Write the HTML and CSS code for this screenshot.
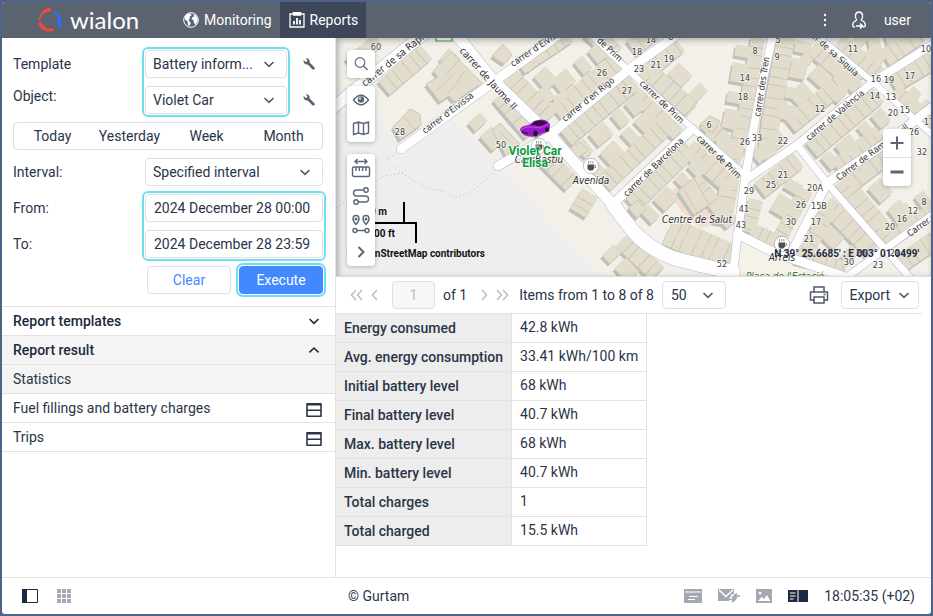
FILE: index.html
```html
<!DOCTYPE html>
<html lang="en">
<head>
    <meta charset="UTF-8">
    <meta name="viewport" content="width=device-width, initial-scale=1.0">
    <title>Wialon - Reports</title>
    <link rel="stylesheet" href="styles.css">
</head>
<body>
    <!-- Shared icons -->
    <svg class="sprite" aria-hidden="true">
        <symbol id="i-down" viewBox="0 0 12 12"><path d="M1.500 4L6 8.300 10.500 4" fill="none" stroke="currentColor" stroke-width="1.600"/></symbol>
        <symbol id="i-up" viewBox="0 0 12 12"><path d="M1.500 8.300L6 4l4.500 4.300" fill="none" stroke="currentColor" stroke-width="1.600"/></symbol>
        <symbol id="i-wrench" viewBox="0 0 12 12"><path d="M.8 4.200A3.100 3.100 0 0 1 .7 2l1.900 1.900 1.500-.3.300-1.500L2.600.5a3.200 3.200 0 0 1 4 4l4.700 4.800a1.300 1.300 0 0 1-1.900 1.900L4.700 6.400A3.200 3.200 0 0 1 .8 4.200z" fill="currentColor"/></symbol>
        <symbol id="i-table" viewBox="0 0 16 16"><path d="M1 1.800h14v12.500H1zM1 8.200h14" fill="none" stroke="currentColor" stroke-width="1.600" stroke-linejoin="round"/><path d="M1 1.500h14v2H1z" fill="currentColor"/></symbol>
        <symbol id="i-cup" viewBox="0 0 16 16"><circle cx="8" cy="8" r="7.300" fill="#fff" stroke="#777a9c" stroke-width="1.200"/><path d="M4.500 6.500h6.500v4l-1.500 2H6l-1.500-2z" fill="#544f52" stroke="none"/><path d="M11 7.500h1.500v2H11M5.500 3v2.500M7.700 3v2.500M9.900 3v2.500" fill="none" stroke="#544f52" stroke-width="1"/></symbol>
    </svg>

    <div class="app">
        <!-- Header -->
        <header class="topbar">
            <a class="logo" href="#">
                <svg width="26" height="26" viewBox="0 0 26 26" fill="none" stroke-linecap="round">
                    <path d="M13 2.500C7 3.500 3.500 8 2.300 13" stroke="#f4473c" stroke-width="1.800"/>
                    <path d="M8 4.200q2.500-1.700 4.500-1.500" stroke="#f4473c" stroke-width="3.600"/>
                    <path d="M3.200 18c3 4.300 8 5.600 12.500 4.700" stroke="#f4473c" stroke-width="2.800"/>
                    <path d="M3.200 17.500q1.500 2.500 4 3.500" stroke="#f4473c" stroke-width="3.800"/>
                    <path d="M17.500 4.500c4 3 6 7 5.500 13" stroke="#2f6bff" stroke-width="2"/>
                    <path d="M22.300 12q.8 3 .3 6" stroke="#2f6bff" stroke-width="3.800"/>
                </svg>
                <span>wialon</span>
            </a>
            <nav class="tabs">
                <a href="#">
                    <svg width="16" height="16" viewBox="0 0 16 16"><circle cx="8" cy="8" r="7.300" fill="none" stroke="#fff"/><path d="M2 4l3-2.500 3 .2.500 1.500L6.500 5 7 6.500 5.500 8l1 1.500 1.300 1.200L6.500 14l-1.500-1-.5-3.500L2 7.500zM10 2l3 1.500 1.800 3.500-.5 3-2 3-1.500-2.500-.3-2.500L8.500 7l1-2 1.800-.5z" fill="#fff"/></svg>
                    Monitoring
                </a>
                <a class="active" href="#">
                    <svg width="16" height="16" viewBox="0 0 16 16" fill="none" stroke="#fff" stroke-width="1.300"><path d="M1 2h14v13H1z"/><path d="M4.500 0v3h7V0" fill="#fff"/><path d="M5 9v3.500M8 6v6.500M11 8v4.500" stroke-width="1.800"/></svg>
                    Reports
                </a>
            </nav>
            <div class="account">
                <button aria-label="Menu">
                    <svg width="4" height="14" viewBox="0 0 4 14" fill="#fff"><circle cx="2" cy="2" r="1.200"/><circle cx="2" cy="7" r="1.200"/><circle cx="2" cy="12" r="1.200"/></svg>
                </button>
                <button class="user">
                    <svg width="16" height="18" viewBox="0 0 16 18" fill="none" stroke="#fff" stroke-width="1.300"><path d="M5.700 8.600C3.800 7 3.600 1 8 1s4.200 6 2.300 7.600c-.2 1.300 4 1.100 4 5.400 0 1.500-1 2-2.300 2M5.700 8.600c.2 1.300-4 1.100-4 5.400 0 1.500 1 2 2.300 2"/><path d="M5 15h6M9 12.500l2.500 2.500L9 17.500" stroke-width="1.500"/></svg>
                    user
                </button>
            </div>
        </header>

        <main class="content">
            <!-- Report settings -->
            <aside class="sidebar">
                <form class="report-form">
                    <div class="group">
                        <div class="labels">
                            <label for="template">Template</label>
                            <label class="raised" for="object">Object:</label>
                        </div>
                        <div class="controls marked">
                            <div class="select"><select id="template"><option>Battery inform...</option></select><svg><use href="#i-down"/></svg></div>
                            <div class="select"><select id="object"><option>Violet Car</option></select><svg><use href="#i-down"/></svg></div>
                        </div>
                        <div class="tools">
                            <button type="button" aria-label="Template properties"><svg width="12" height="12"><use href="#i-wrench"/></svg></button>
                            <button type="button" aria-label="Object properties"><svg width="12" height="12"><use href="#i-wrench"/></svg></button>
                        </div>
                    </div>
                    <div class="presets">
                        <button type="button">Today</button>
                        <button type="button">Yesterday</button>
                        <button type="button">Week</button>
                        <button type="button">Month</button>
                    </div>
                    <div class="group">
                        <div class="labels"><label for="interval">Interval:</label></div>
                        <div class="controls">
                            <div class="select"><select id="interval"><option>Specified interval</option></select><svg><use href="#i-down"/></svg></div>
                        </div>
                    </div>
                    <div class="group">
                        <div class="labels">
                            <label for="from">From:</label>
                            <label for="to">To:</label>
                        </div>
                        <div class="controls marked">
                            <input type="text" id="from" value="2024 December 28 00:00">
                            <input type="text" id="to" value="2024 December 28 23:59">
                        </div>
                    </div>
                    <div class="actions">
                        <button type="button" class="clear">Clear</button>
                        <button type="button" class="execute marked">Execute</button>
                    </div>
                </form>
                <div class="sections">
                    <button class="section">Report templates<svg width="12" height="12"><use href="#i-down"/></svg></button>
                    <button class="section open">Report result<svg width="12" height="12"><use href="#i-up"/></svg></button>
                    <a class="item open" href="#">Statistics</a>
                    <a class="item" href="#">Fuel fillings and battery charges<svg width="16" height="16"><use href="#i-table"/></svg></a>
                    <a class="item" href="#">Trips<svg width="16" height="16"><use href="#i-table"/></svg></a>
                </div>
            </aside>

            <section class="workarea">
                <!-- Map -->
                <div class="map">
                    <svg class="map-canvas" viewBox="336 38 595 238" preserveAspectRatio="xMinYMin slice">
                        <defs>
                            <g id="lots" fill="none">
                                <g stroke-width="18">
                                    <path d="M510 76l40 42M556 112l66-54M566 138l68-56M520 66l48-32M632 48l23-18M645 72l34-28"/>
                                    <path d="M645 68l47 42M688 148l45 40M604 184l68-64M632 205l58-57M500 95l32 38M622 240l36 34"/>
                                    <path d="M786 38l-15 82-5 40M790 125l70-57M812 150l66-55M760 190l38-30M838 42l42 35M885 58l35-24M893 84l40-24"/>
                                    <path d="M849 184l42-32M842 180l50 60M826 204l46 46M900 264l35-24M384 88l42-36M590 30l26 24"/>
                                    <path d="M546 158l26 26M590 193l-12 20M671 226l62 28M666 236l56 24M730 180l-8 44"/>
                                </g>
                                <g stroke-width="14">
                                    <path d="M758 38l-12 72-13 52M812 48l46 40M835 166l44-34M806 190l-26 48M830 208l-24 46M895 90l38 34M705 122l38 34"/>
                                    <path d="M636 94l42 40M755 158l28-22M756 200l-8 32M752 230l30 14M796 256l50 12M893 238l40-28M694 178l38 46M350 64l28-24M444 54l12 10"/>
                                </g>
                                <g stroke-width="16" class="yards">
                                    <path d="M528 58l36 42M542 98l68-54M580 152l62-52M660 56l44 42M592 172l66-62M646 218l58-56M702 138l40 36"/>
                                    <path d="M744 46l-12 70-12 46M804 42l-16 78M780 112l60-52M826 164l60-50M800 58l44 40M856 36l40 36M796 182l-24 40"/>
                                    <path d="M862 170l52 58M812 218l46 44M908 92l30 30M880 230l50-34M474 118l30 34M608 250l28 30M868 42l50-14"/>
                                </g>
                            </g>
                            <g id="houses">
                                <path d="M426 84l12-7-5-6 18-19 31 31-28 19-5-6-9 6z"/>
                                <path d="M393 127l17-18 10 5 1 11-21 15z"/>
                                <path d="M492 56l11-12 9 11-8 9z"/>
                                <path d="M492 130l8-7 20 21-14 12z"/>
                                <path d="M678 191l16-13 15 27-15 10z"/>
                                <path d="M700 124l10-8 10 5-7 12z"/>
                                <path d="M570 148l10-6 8 8-10 8z"/>
                                <path d="M628 208l10-8 8 9-9 9z"/>
                            </g>
                        </defs>
                        <path class="land" d="M336 38h600v240H336z"/>
                        <path class="field" d="M336 112l40-4 27 46 50-33 147 155H336z"/>
                        <path class="square" d="M738 238l100 42H738z"/>
                        <path class="clinic" d="M668 192l22-13 29 44-19 5-18-16z"/>

                        <!-- Buildings -->
                        <g transform="translate(-2 3)"><use href="#lots" class="shade"/><use href="#houses" class="house-shade"/></g>
                        <use href="#lots" class="edge"/>
                        <use href="#lots" class="roof"/>
                        <use href="#houses" class="house"/>
                        <path class="walls" d="M436 91l19-18M447 94l14-14M459 60l-14 16M404 117l12 14M500 132l9 9M684 190l13 22M466 70l-10 12"/>

                        <!-- Footpaths -->
                        <path class="trail" d="M397 153l-10 6 16 15 25 15 15 2 12 6 15-4 22-19 8-12M403 173l-20 3-20 15-28 17"/>

                        <!-- Streets -->
                        <g class="street-line">
                            <path stroke-width="13" d="M330 110L426 32"/>
                            <path stroke-width="10" d="M401 149L560 34M498 166l54-32"/>
                            <path stroke-width="12" d="M456 34l36 45 58 56 63 70"/>
                            <path stroke-width="15" d="M613 205l20 26q16 18 40 27 28 8 60 14"/>
                            <path stroke-width="10" d="M550 135l78-65 50-36M615 202l77-73M737 234l36 18 75 26M793 250l34-67 56-38 52-40"/>
                            <path stroke-width="7" d="M590 34l38 36 64 58 53 47M815 34l58 48 62 55"/>
                            <path stroke-width="9" d="M773 34l-15 70-13 74-13 102M745 180l52-35 76-63 62-39"/>
                            <path stroke-width="8" d="M797 145l30 38 58 66 28 32M840 282l45-33 50-36"/>
                        </g>
                        <g class="street">
                            <path stroke-width="12" d="M330 110L426 32"/>
                            <path stroke-width="9" d="M401 149L560 34M498 166l54-32"/>
                            <path stroke-width="11" d="M456 34l36 45 58 56 63 70"/>
                            <path stroke-width="14" d="M613 205l20 26q16 18 40 27 28 8 60 14"/>
                            <path stroke-width="9" d="M550 135l78-65 50-36M615 202l77-73M737 234l36 18 75 26M793 250l34-67 56-38 52-40"/>
                            <path stroke-width="6" d="M590 34l38 36 64 58 53 47M815 34l58 48 62 55"/>
                            <path stroke-width="8" d="M773 34l-15 70-13 74-13 102M745 180l52-35 76-63 62-39"/>
                            <path stroke-width="7" d="M797 145l30 38 58 66 28 32M840 282l45-33 50-36"/>
                        </g>
                        <path d="M436 36h16v5h-16z" fill="#fff" stroke="#3aa34a" stroke-width="1.200"/>

                        <!-- Street names -->
                        <g class="street-name">
                            <text class="big" transform="translate(365 87) rotate(-39)">carrer de sa Rapita</text>
                            <text class="big" transform="translate(459 51) rotate(48)">carrer de Jaume II</text>
                            <text transform="translate(425 134) rotate(-37)">carrer d'Eivissa</text>
                            <text transform="translate(513 67) rotate(-34)">carrer d'Eivissa</text>
                            <text transform="translate(565 122) rotate(-39)">carrer d'en Rigo</text>
                            <text transform="translate(577 23) rotate(43)">carrer de Prim</text>
                            <text transform="translate(639 84) rotate(44)">carrer de Prim</text>
                            <text transform="translate(696 139) rotate(44)">carrer de Prim</text>
                            <text transform="translate(627 197) rotate(-44)">carrer de Barcelona</text>
                            <text transform="translate(760 117) rotate(-81)">carrer des Tren</text>
                            <text transform="translate(809 141) rotate(-40)">carrer de València</text>
                            <text transform="translate(799 26) rotate(42)">carrer de sa Siquia</text>
                            <text transform="translate(839 181) rotate(-37)">Carrer de Ramon Llull</text>
                            <text transform="translate(910 237) rotate(-36)">Carrer de</text>
                            <text transform="translate(670 41) rotate(-38)">carrer</text>
                        </g>

                        <!-- House numbers -->
                        <g class="number">
                            <text x="376" y="50">60</text><text x="400" y="135">28</text><text x="501" y="148">50</text><text x="602" y="76">26</text><text x="627" y="94">27</text>
                            <text x="637" y="55">18</text><text x="656" y="68">21</text><text x="669" y="62">19</text><text x="639" y="72">23</text><text x="651" y="43">14</text>
                            <text x="755" y="54">8</text><text x="777" y="60">9</text><text x="778" y="43">5</text><text x="745" y="81">14</text><text x="743" y="100">18</text>
                            <text x="709" y="128">6</text><text x="745" y="145">26</text><text x="757" y="141">33</text><text x="783" y="144">22</text><text x="820" y="112">12</text>
                            <text x="853" y="52">11</text><text x="926" y="52">10</text><text x="876" y="82">16</text><text x="889" y="83">19</text><text x="910" y="79">17</text>
                            <text x="875" y="99">14</text><text x="891" y="100">13</text><text x="893" y="116">20</text><text x="905" y="113">15</text><text x="929" y="125">17</text>
                            <text x="914" y="135">26</text><text x="922" y="155">32</text><text x="783" y="178">21</text><text x="771" y="188">25</text><text x="749" y="194">29</text>
                            <text x="744" y="212">41</text><text x="741" y="228">43</text><text x="722" y="267">52</text><text x="815" y="191">20A</text><text x="801" y="208">26</text>
                            <text x="819" y="209">15B</text><text x="791" y="225">30</text><text x="816" y="225">17</text><text x="809" y="242">21</text><text x="924" y="205">8</text>
                            <text x="913" y="214">12</text><text x="902" y="222">16</text><text x="890" y="230">20</text><text x="849" y="265">30</text><text x="878" y="268">23</text>
                            <text x="861" y="256">26</text><text x="895" y="256">21</text>
                        </g>

                        <!-- Places -->
                        <g class="place">
                            <use href="#i-cup" x="531" y="138" width="16" height="16"/>
                            <use href="#i-cup" x="583" y="158" width="16" height="16"/>
                            <use href="#i-cup" x="774" y="236" width="16" height="16"/>
                            <text x="539" y="163">Can Bastiu</text>
                            <text x="591" y="184">Avenida</text>
                            <text x="697" y="223">Centre de Salut</text>
                            <text x="782" y="261">Arrels</text>
                            <text class="green" x="785" y="280">Plaça de l'Estació</text>
                        </g>

                        <!-- Unit -->
                        <g transform="translate(519 118)">
                            <path d="M3 17l14 3 14-7-3-2z" fill="#4a4a45" opacity=".5"/>
                            <path d="M1 11q1-3 9-4l5-4q8-3 13 0l3 3-.5 6-3 2-9 3-5 1.500q-7 0-11-3.500z" fill="#9a17cf"/>
                            <path d="M12 7l4-3.500q6-2 10-.3L28 5l-6 3z" fill="#351045"/>
                            <path d="M2 11q6-3 13-2l6 1 9-4" fill="none" stroke="#c74bea"/>
                            <ellipse cx="16.500" cy="15.500" rx="2.200" ry="3" fill="#231a28"/><ellipse cx="28" cy="11.500" rx="1.800" ry="2.600" fill="#231a28"/>
                            <path d="M3 14l6 1.500" stroke="#4e0a69" stroke-width="1.500"/>
                        </g>
                        <text class="unit" x="535" y="155">Violet Car</text>
                        <text class="unit" x="535" y="167">Elisa</text>

                        <!-- Scale -->
                        <path d="M360 223h56M404 202v21M416 222v21" fill="none" stroke="#000" stroke-width="2"/>
                        <g class="scale">
                            <text x="387" y="215">30 m</text>
                            <text x="395" y="237">100 ft</text>
                            <text x="485" y="257">© OpenStreetMap contributors</text>
                            <text class="coords" x="919" y="257">N 39° 25.6685' : E 003° 01.0499'</text>
                        </g>
                    </svg>

                    <div class="map-tools">
                        <div class="tool-group">
                            <button aria-label="Search"><svg width="18" height="18" viewBox="0 0 18 18"><circle cx="8" cy="7.500" r="4.800" stroke-width="1.200"/><path d="M11.500 11l4 4" stroke-width="1.200"/></svg></button>
                        </div>
                        <div class="tool-group">
                            <button aria-label="Visibility"><svg width="18" height="18" viewBox="0 0 18 18"><path d="M1.500 9Q9-.5 16.500 9 9 18.500 1.500 9z"/><circle cx="9" cy="8.500" r="3.200" fill="#5b6679" stroke="none"/><circle cx="8" cy="7.500" r="1" fill="#fff" stroke="none"/></svg></button>
                            <button aria-label="Map layers"><svg width="18" height="18" viewBox="0 0 18 18"><path d="M1.500 4.500L6.500 3l5 1.500 5-1.500v11l-5 1.500-5-1.500-5 1.500zM6.500 3v11M11.500 4.500v11"/></svg></button>
                        </div>
                        <div class="tool-group">
                            <button aria-label="Distance"><svg width="20" height="20" viewBox="0 0 20 20"><path d="M4 3.500h12M6.500 1L4 3.500 6.500 6M13.500 1L16 3.500 13.500 6"/><rect x="1.500" y="9" width="17" height="9.500" rx="1.500"/><path d="M5 9v4M8.300 9v4M11.600 9v4M15 9v4"/></svg></button>
                            <button aria-label="Routing"><svg width="20" height="20" viewBox="0 0 20 20"><circle cx="15" cy="4" r="2.200"/><circle cx="5" cy="16" r="2.200"/><path d="M12.800 4H5.500a3 3 0 0 0 0 6h9a3 3 0 0 1 0 6H7.200M8 10h4"/></svg></button>
                            <button aria-label="Nearest units"><svg width="20" height="20" viewBox="0 0 20 20"><path d="M5 10.500C.5 6 1.500 1.500 5 1.500s4.500 4.500 0 9zM15 10.500c-4.500-4.500-3.500-9 0-9s4.500 4.500 0 9zM6 16.500h8"/><circle cx="5" cy="5" r=".8"/><circle cx="15" cy="5" r=".8"/><circle cx="4" cy="16.500" r="2"/><circle cx="16" cy="16.500" r="2"/></svg></button>
                            <button aria-label="More tools"><svg width="18" height="18" viewBox="0 0 18 18"><path d="M6.500 4l5 5-5 5" stroke-width="2"/></svg></button>
                        </div>
                    </div>
                    <div class="zoom">
                        <button aria-label="Zoom in"><svg width="18" height="18" viewBox="0 0 18 18"><path d="M9 2.500v13M2.500 9h13" stroke-width="2"/></svg></button>
                        <button aria-label="Zoom out"><svg width="18" height="18" viewBox="0 0 18 18"><path d="M2.500 9h13" stroke-width="3"/></svg></button>
                    </div>
                </div>

                <!-- Report toolbar -->
                <div class="pager">
                    <button class="arrow" aria-label="First page"><svg width="13" height="12" viewBox="0 0 13 12"><path d="M6 1L1.500 6 6 11M12 1L7.500 6l4.500 5"/></svg></button>
                    <button class="arrow prev" aria-label="Previous page"><svg width="7" height="12" viewBox="0 0 7 12"><path d="M6 1L1.500 6 6 11"/></svg></button>
                    <input class="page" type="text" value="1" aria-label="Page" disabled>
                    <span class="total">of 1</span>
                    <button class="arrow" aria-label="Next page"><svg width="7" height="12" viewBox="0 0 7 12"><path d="M1 1l4.500 5L1 11"/></svg></button>
                    <button class="arrow last" aria-label="Last page"><svg width="13" height="12" viewBox="0 0 13 12"><path d="M1 1l4.500 5L1 11M7 1l4.500 5L7 11"/></svg></button>
                    <span class="range">Items from 1 to 8 of 8</span>
                    <div class="select count"><select aria-label="Items per page"><option>50</option></select><svg><use href="#i-down"/></svg></div>
                    <button class="print" aria-label="Print"><svg width="20" height="20" viewBox="0 0 20 20"><path d="M5 7V2h10v5M5 15H1.500V7h17v8H15M5 12h10v6H5zM14.500 9.500h2"/></svg></button>
                    <button class="export">Export<svg width="12" height="12"><use href="#i-down"/></svg></button>
                </div>

                <table class="stats">
                    <tr><th>Energy consumed</th><td>42.8 kWh</td></tr>
                    <tr><th>Avg. energy consumption</th><td>33.41 kWh/100 km</td></tr>
                    <tr><th>Initial battery level</th><td>68 kWh</td></tr>
                    <tr><th>Final battery level</th><td>40.7 kWh</td></tr>
                    <tr><th>Max. battery level</th><td>68 kWh</td></tr>
                    <tr><th>Min. battery level</th><td>40.7 kWh</td></tr>
                    <tr><th>Total charges</th><td>1</td></tr>
                    <tr><th>Total charged</th><td>15.5 kWh</td></tr>
                </table>
            </section>
        </main>

        <!-- Footer -->
        <footer class="statusbar">
            <div class="layout">
                <button aria-label="Toggle panel"><svg width="16" height="14" viewBox="0 0 16 14"><path d="M.5.5h15v13H.5z" fill="#fff" stroke="#1d2940"/><path d="M0 0h5v14H0z" fill="#1d2940"/></svg></button>
                <button aria-label="Apps"><svg width="14" height="14" viewBox="0 0 14 14" fill="#a3a8b2"><path d="M0 0h4v4H0zM5 0h4v4H5zM10 0h4v4h-4zM0 5h4v4H0zM5 5h4v4H5zM10 5h4v4h-4zM0 10h4v4H0zM5 10h4v4H5zM10 10h4v4h-4z"/></svg></button>
            </div>
            <span>© Gurtam</span>
            <div class="indicators">
                <button aria-label="Notifications"><svg width="18" height="14" viewBox="0 0 18 14"><path d="M0 0h18v14H0z" fill="#a3a8b2"/><path d="M1 3h16M5 7.500h9M4 10.500h7" stroke="#fff" stroke-width="1.200"/></svg></button>
                <button aria-label="Messages"><svg width="22" height="14" viewBox="0 0 22 14"><path d="M0 0h16v5h-2l-3 5v2H0z" fill="#a3a8b2"/><path d="M1 1l7 6.500L15 1" fill="none" stroke="#fff" stroke-width="1.500"/><path d="M22 7h-6M18.800 4.500L16 7l2.800 2.500M11 10.500h6M14.200 8l2.800 2.500-2.800 2.500" fill="none" stroke="#a3a8b2" stroke-width="1.700"/></svg></button>
                <button aria-label="Media"><svg width="16" height="14" viewBox="0 0 16 14"><path d="M0 0h16v14H0z" fill="#a3a8b2"/><circle cx="4" cy="4" r="1.500" fill="#fff"/><path d="M2 12l3.500-4L8 10l3-4 3.500 6z" fill="#fff"/></svg></button>
                <button aria-label="Split view"><svg width="20" height="12" viewBox="0 0 20 12"><path d="M0 0h9.500v12H0zM10.500 0H20v12h-9.500z" fill="#1d2940"/><path d="M2 3h5.500M2 6h5.500M2 9h3.500" stroke="#fff" stroke-width="1.200"/></svg></button>
                <time>18:05:35 (+02)</time>
            </div>
        </footer>
    </div>
</body>
</html>
```
FILE: styles.css
```css
* {
    margin: 0;
    padding: 0;
    box-sizing: border-box;
}

body {
    font-family: Roboto, sans-serif;
    font-size: 14px;
    line-height: 20px;
    color: #2a3548;
    background: #4f6389;
}

button,
input,
select {
    font: inherit;
    color: inherit;
    background: none;
    border: none;
}

button {
    cursor: pointer;
}

a {
    color: inherit;
    text-decoration: none;
}

svg {
    display: block;
    flex: none;
}

.sprite {
    position: absolute;
    width: 0;
    height: 0;
}

.app {
    display: flex;
    flex-direction: column;
    height: 100vh;
    border: 2px solid #4f6389;
    border-radius: 5px;
    background: #fff;
    overflow: hidden;
}

/* Header */
.topbar {
    display: flex;
    height: 36px;
    background: #5c6370;
    color: #fff;
}

.logo {
    display: flex;
    align-items: center;
    gap: 7px;
    width: 172px;
    padding-left: 35px;
    font-family: Lato, sans-serif;
    font-size: 24px;
}

.tabs {
    display: flex;
}

.tabs a {
    display: flex;
    align-items: center;
    gap: 5px;
    padding: 0 8px 0 9px;
}

.tabs .active {
    background: #3e4759;
}

.account {
    display: flex;
    align-items: center;
    gap: 24px;
    margin-left: auto;
    padding-right: 20px;
}

.user {
    display: flex;
    align-items: center;
    gap: 17px;
}

.content {
    display: flex;
    flex: 1;
    min-height: 0;
}

/* Sidebar */
.sidebar {
    flex: none;
    width: 334px;
    border-right: 1px solid #e2e2e2;
}

.report-form {
    display: flex;
    flex-direction: column;
    gap: 8px;
    padding: 12px 12px 12px 11px;
    border-bottom: 1px solid #e2e2e2;
}

.group {
    display: flex;
}

.labels {
    display: flex;
    flex-direction: column;
    gap: 8px;
    width: 132px;
}

.labels label {
    height: 28px;
    line-height: 28px;
}

.labels .raised {
    line-height: 20px;
}

.controls {
    display: flex;
    flex: 1;
    flex-direction: column;
    gap: 8px;
    min-width: 0;
}

.marked {
    outline: 2px solid #6ddff0;
    outline-offset: 1px;
    border-radius: 3px;
}

.select {
    position: relative;
}

.select select,
.controls input {
    display: block;
    width: 100%;
    height: 28px;
    padding: 0 8px;
    border: 1px solid #dfe0e2;
    border-radius: 4px;
    background: #fff;
    appearance: none;
}

.select select {
    padding: 0 7px;
}

.select svg {
    position: absolute;
    top: 8px;
    right: 12px;
    width: 12px;
    height: 12px;
    color: #4f5a6c;
    pointer-events: none;
}

.tools {
    display: flex;
    flex-direction: column;
    gap: 8px;
    margin-left: 16px;
    padding-right: 8px;
    color: #5a6270;
}

.tools button {
    height: 28px;
}

.presets {
    display: flex;
    height: 28px;
    border: 1px solid #dfe0e2;
    border-radius: 4px;
}

.presets button {
    flex: 1 1 0;
}

.actions {
    display: flex;
    justify-content: flex-end;
    gap: 8px;
}

.actions button {
    width: 84px;
    height: 28px;
    border: 1px solid #dfe0e2;
    border-radius: 4px;
    color: #4289ff;
}

.actions .execute {
    border-color: #4289ff;
    background: #4289ff;
    color: #fff;
}

.section,
.item {
    display: flex;
    align-items: center;
    justify-content: space-between;
    width: 100%;
    height: 29px;
    padding: 0 13px 0 11px;
    border-bottom: 1px solid #e2e2e2;
}

.section {
    padding-right: 15px;
    font-weight: 500;
    color: #1d2940;
}

.item svg {
    margin-top: 4px;
}

.open {
    background: #f4f4f4;
}

/* Map */
.workarea {
    display: flex;
    flex: 1;
    flex-direction: column;
    align-items: flex-start;
    min-width: 0;
}

.map {
    position: relative;
    width: 100%;
    height: 239px;
    border-bottom: 1px solid #dcdcdc;
    overflow: hidden;
}

.map::after {
    content: "";
    position: absolute;
    inset: 0;
    box-shadow: inset 2px 2px 6px rgba(0, 0, 0, 0.3);
    pointer-events: none;
}

.map-canvas {
    width: 100%;
    height: 100%;
}

.land {
    fill: #f2f0e9;
}

.field {
    fill: #edeeed;
}

.square {
    fill: #f5f2e8;
}

.clinic {
    fill: #f3dccf;
}

.yards {
    stroke-dasharray: 11 7 19 10;
}

.shade {
    stroke: #c1c0b8;
}

.edge {
    stroke: #cdc8b4;
}

.roof {
    stroke: #e2ddcd;
    stroke-dasharray: 9 1 7 1 12 1;
}

.house-shade {
    fill: #c1c0b8;
}

.house {
    fill: #e2ddcd;
    stroke: #cdc8b4;
}

.walls {
    fill: none;
    stroke: #cdc8b4;
}

.trail {
    fill: none;
    stroke: #c5b5b5;
    stroke-dasharray: 1 3;
}

.street-line,
.street {
    fill: none;
    stroke-linecap: round;
    stroke-linejoin: round;
}

.street-line {
    stroke: #b4b6d0;
}

.street {
    stroke: #fefefe;
}

.street-name,
.number,
.place {
    font-family: "DejaVu Sans Condensed", "DejaVu Sans", sans-serif;
    font-size: 9px;
    fill: #303030;
    stroke: #fff;
    stroke-width: 2px;
    stroke-opacity: 0.6;
    paint-order: stroke;
}

.number {
    text-anchor: middle;
    fill: #444;
}

.street-name .big,
.place {
    font-size: 10px;
}

.place {
    font-style: italic;
    text-anchor: middle;
}

.place .green {
    fill: #3b7d2e;
}

.unit {
    font-size: 12px;
    font-weight: 700;
    text-anchor: middle;
    fill: #0a9d41;
    stroke: #fff;
    stroke-width: 2px;
    stroke-opacity: 0.6;
    paint-order: stroke;
}

.scale {
    font-size: 10px;
    font-weight: 700;
    text-anchor: end;
    fill: #111;
}

.scale .coords {
    fill: #1d2940;
}

.map-tools {
    position: absolute;
    top: 12px;
    left: 11px;
    display: flex;
    flex-direction: column;
    gap: 8px;
}

.tool-group,
.zoom {
    display: flex;
    flex-direction: column;
    border-radius: 4px;
    background: #fff;
    box-shadow: 0 1px 4px rgba(0, 0, 0, 0.25);
}

.tool-group:last-child {
    margin-top: 4px;
}

.tool-group button,
.zoom button {
    display: grid;
    place-items: center;
    width: 28px;
    height: 28px;
}

.tool-group svg,
.zoom svg {
    fill: none;
    stroke: #5b6679;
    stroke-width: 1.4;
}

.zoom {
    position: absolute;
    top: 91px;
    right: 20px;
}

.zoom button + button {
    height: 29px;
    border-top: 1px solid #ddd;
}

/* Report toolbar */
.pager {
    display: flex;
    align-items: center;
    align-self: stretch;
    height: 37px;
    margin-right: 9px;
    padding: 0 3px 0 14px;
    border-bottom: 1px solid #e2e2e2;
}

.arrow svg {
    fill: none;
    stroke: #b9bdc5;
    stroke-width: 1.5;
}

.prev {
    margin: 0 14px 0 8px;
}

.page {
    width: 43px;
    height: 28px;
    border: 1px solid #dfe0e2;
    border-radius: 4px;
    background: #f7f7f7;
    color: #b9bdc5;
    text-align: center;
}

.total {
    margin: 0 14px 0 8px;
}

.last {
    margin: 0 10px 0 8px;
}

.count {
    width: 64px;
    margin-left: 8px;
}

.count select {
    padding: 0 8px;
}

.print {
    margin-left: auto;
}

.print svg {
    fill: none;
    stroke: #4f5a6c;
    stroke-width: 1.5;
}

.export {
    display: flex;
    align-items: center;
    gap: 8px;
    height: 28px;
    margin-left: 12px;
    padding: 0 8px;
    border: 1px solid #dfe0e2;
    border-radius: 4px;
}

.export svg {
    color: #4f5a6c;
}

.stats {
    border-spacing: 0;
}

.stats th,
.stats td {
    height: 29px;
    padding: 0 8px;
    border-right: 1px solid #e2e2e2;
    border-bottom: 1px solid #e2e2e2;
    text-align: left;
}

.stats td {
    padding-bottom: 2px;
}

.stats th {
    background: #ededed;
    font-weight: 500;
}

/* Footer */
.statusbar {
    display: flex;
    align-items: center;
    height: 37px;
    border-top: 1px solid #e2e2e2;
}

.layout {
    display: flex;
    align-items: center;
    gap: 19px;
    width: 346px;
    padding-left: 20px;
}

.indicators {
    display: flex;
    align-items: center;
    gap: 16px;
    margin-left: auto;
    padding-right: 16px;
}
```
